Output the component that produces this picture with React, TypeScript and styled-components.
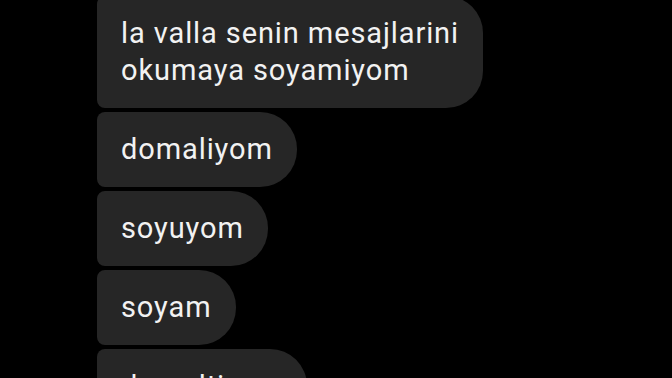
import React from 'react';
import styled, { createGlobalStyle } from 'styled-components';

const GlobalStyle = createGlobalStyle`
  html, body {
    margin: 0;
    padding: 0;
    background: #000;
    overflow: hidden;
  }
`;

const Screen = styled.div`
  width: 672px;
  height: 378px;
  background: #000;
  overflow: hidden;
`;

const Thread = styled.div`
  display: flex;
  flex-direction: column;
  align-items: flex-start;
  gap: 4px;
  padding-left: 97px;
  margin-top: -4px;
`;

const Bubble = styled.div`
  background: #262626;
  color: #f2f2f2;
  font-family: Roboto, "Liberation Sans", sans-serif;
  font-size: 29px;
  line-height: 37px;
  letter-spacing: 0.9px;
  padding: 19px 24px 19px 24px;
  border-radius: 8px 37px 37px 8px;
  white-space: pre-line;
`;

const messages = [
  'la valla senin mesajlarini\nokumaya soyamiyom',
  'domaliyom',
  'soyuyom',
  'soyam',
  'domaltiyom',
];

export default function App() {
  return (
    <Screen>
      <GlobalStyle />
      <Thread>
        {messages.map((m, i) => (
          <Bubble key={i}>{m}</Bubble>
        ))}
      </Thread>
    </Screen>
  );
}
